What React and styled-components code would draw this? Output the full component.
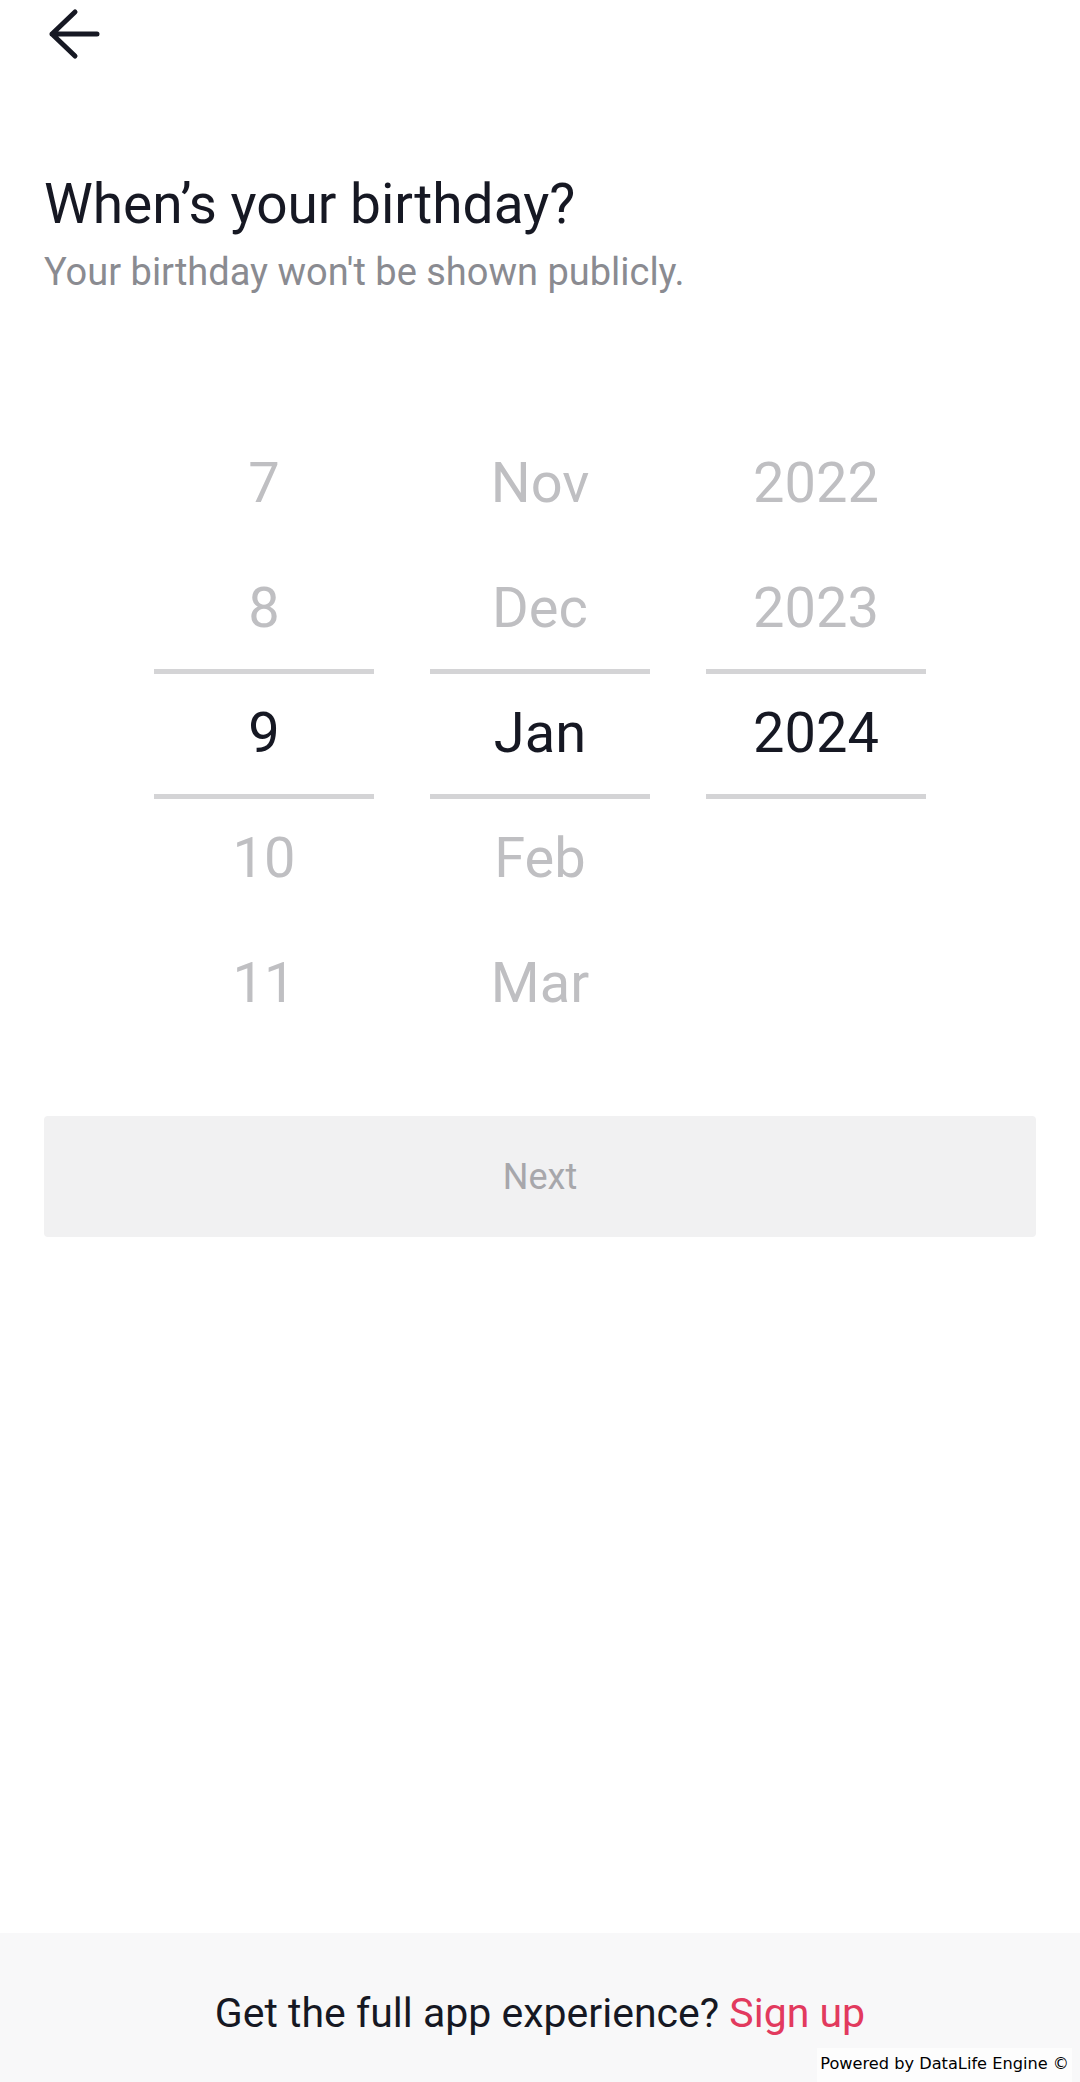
import React from 'react';
import styled, { createGlobalStyle } from 'styled-components';

const ink = '#161823';

const GlobalStyle = createGlobalStyle`
  html, body {
    margin: 0;
    padding: 0;
    background: #ffffff;
  }
  body {
    font-family: Roboto, 'Liberation Sans', Arial, sans-serif;
    color: ${ink};
  }
  * {
    box-sizing: border-box;
  }
`;

const days = ['7', '8', '9', '10', '11'];
const months = ['Nov', 'Dec', 'Jan', 'Feb', 'Mar'];
const years = ['2022', '2023', '2024'];

const BackArrow = () => (
  <svg width='52' height='52' viewBox='0 0 52 52' fill='none'>
    <path
      d='M4 26 H49 M27 4 L4 26 L27 48'
      stroke={ink}
      strokeWidth='5'
      strokeLinecap='round'
      strokeLinejoin='round'
    />
  </svg>
);

const WheelColumn = ({ items, selected }) => (
  <Column>
    {items.map((item) => (
      <Item key={item} $selected={item === selected}>
        {item}
      </Item>
    ))}
  </Column>
);

const App = () => (
  <Page>
    <GlobalStyle />
    <Main>
      <TopBar>
        <BackButton aria-label='Back'>
          <BackArrow />
        </BackButton>
      </TopBar>
      <Content>
        <Title>When’s your birthday?</Title>
        <Subtitle>Your birthday won't be shown publicly.</Subtitle>
        <Picker>
          <WheelColumn items={days} selected='9' />
          <WheelColumn items={months} selected='Jan' />
          <WheelColumn items={years} selected='2024' />
        </Picker>
        <NextButton disabled>Next</NextButton>
      </Content>
    </Main>
    <Footer>
      <Prompt>
        Get the full app experience? <SignUp href='#'>Sign up</SignUp>
      </Prompt>
      <Powered>Powered by DataLife Engine ©</Powered>
    </Footer>
  </Page>
);

const Page = styled.div`
  display: flex;
  flex-direction: column;
  min-height: 2082px;
`;

const Main = styled.main`
  flex: 1;
`;

const TopBar = styled.header`
  display: flex;
  align-items: flex-start;
  height: 60px;
  padding: 8px 0 0 48px;
`;

const BackButton = styled.button`
  display: flex;
  padding: 0;
  border: none;
  background: none;
  cursor: pointer;
`;

const Content = styled.section`
  display: flex;
  flex-direction: column;
  padding: 0 44px;
`;

const Title = styled.h2`
  margin: 112px 0 0;
  font-size: 55px;
  line-height: 65px;
  font-weight: 400;
  color: ${ink};
`;

const Subtitle = styled.p`
  margin: 11px 0 0;
  font-size: 38px;
  line-height: 48px;
  color: #8a8b91;
`;

const Picker = styled.div`
  display: grid;
  grid-template-columns: repeat(3, 220px);
  column-gap: 56px;
  justify-content: center;
  align-items: start;
  margin-top: 125px;
  height: 625px;
`;

const Column = styled.div`
  display: flex;
  flex-direction: column;
`;

const Item = styled.div`
  position: relative;
  height: 125px;
  line-height: 125px;
  text-align: center;
  font-size: 56px;
  color: ${(p) => (p.$selected ? ink : '#bfbfc2')};

  ${(p) =>
    p.$selected &&
    `
    &::before,
    &::after {
      content: '';
      position: absolute;
      left: 0;
      right: 0;
      height: 5px;
      background: #d4d4d6;
    }
    &::before { top: -2px; }
    &::after { bottom: -3px; }
  `}
`;

const NextButton = styled.button`
  margin-top: 70px;
  width: 100%;
  height: 121px;
  border: none;
  border-radius: 4px;
  background: #f1f1f2;
  color: #a7a7ab;
  font-family: inherit;
  font-size: 36px;
  font-weight: 400;
`;

const Footer = styled.footer`
  position: relative;
  height: 149px;
  padding-top: 54px;
  background: #f8f8f9;
  text-align: center;
`;

const Prompt = styled.p`
  margin: 0;
  font-size: 41px;
  line-height: 52px;
  color: ${ink};
`;

const SignUp = styled.a`
  color: #e23a5e;
  text-decoration: none;
`;

const Powered = styled.div`
  position: absolute;
  right: 8px;
  bottom: 0;
  padding: 6px 3px 8px;
  background: #fdfdfd;
  font-family: 'DejaVu Sans', Verdana, sans-serif;
  font-size: 16.2px;
  line-height: 20px;
  color: #000000;
`;

export default App;
